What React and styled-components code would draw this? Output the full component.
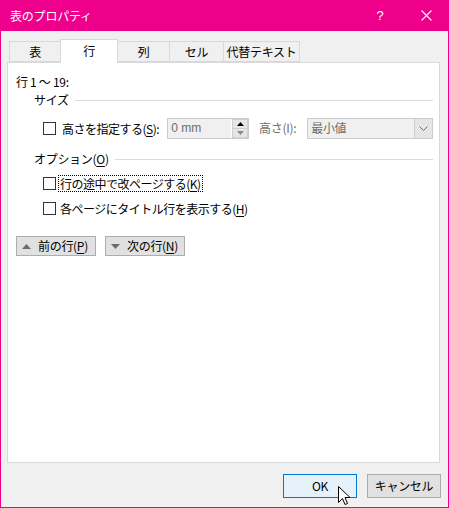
import React from "react";
import styled, { createGlobalStyle } from "styled-components";

const GlobalStyle = createGlobalStyle`
  body {
    margin: 0;
    background: #ffffff;
    font-family: "Noto Sans CJK JP", "Noto Sans", sans-serif;
    font-size: 12px;
    color: #000;
  }
`;

const PINK = "#EF008C";

const Window = styled.div`
  position: relative;
  width: 449px;
  height: 508px;
  box-sizing: border-box;
  border: 1px solid ${PINK};
  border-top: none;
  background: #f0f0f0;
  display: flex;
  flex-direction: column;
`;

const TitleBar = styled.div`
  height: 31px;
  background: ${PINK};
  margin: 0 -1px;
  display: flex;
  align-items: center;
  padding-left: 10px;
  color: #fff;
`;

const Title = styled.div`
  flex: 1;
  font-size: 12px;
  line-height: 16px;
  letter-spacing: -0.2px;
`;

const TitleButton = styled.div`
  width: 46px;
  height: 31px;
  display: flex;
  align-items: center;
  justify-content: center;
  font-family: "Liberation Sans", sans-serif;
  font-size: 13px;
`;

const Body = styled.div`
  flex: 1;
  display: flex;
  flex-direction: column;
  padding: 8px 8px 0 6px;
`;

const TabStrip = styled.div`
  display: flex;
  align-items: flex-end;
  height: 23px;
  padding-left: 2px;
`;

const Tab = styled.div`
  box-sizing: border-box;
  width: ${(p) => p.$w}px;
  height: ${(p) => (p.$active ? 24 : 21)}px;
  margin-bottom: ${(p) => (p.$active ? -1 : 0)}px;
  margin-left: ${(p) => (p.$first ? 0 : -1)}px;
  border: 1px solid #d9d9d9;
  border-bottom: ${(p) => (p.$active ? "none" : "1px solid #d9d9d9")};
  background: ${(p) => (p.$active ? "#fff" : "#f0f0f0")};
  position: relative;
  z-index: ${(p) => (p.$active ? 1 : 0)};
  display: flex;
  align-items: center;
  justify-content: center;
  padding-bottom: ${(p) => (p.$active ? 2 : 0)}px;
  line-height: 16px;
  letter-spacing: -0.3px;
`;

const Panel = styled.div`
  box-sizing: border-box;
  height: 401px;
  background: #fff;
  border: 1px solid #d9d9d9;
  padding: 11px 6px 0 8px;
  display: flex;
  flex-direction: column;
`;

const Text = styled.div`
  line-height: 16px;
  letter-spacing: -0.3px;
  white-space: nowrap;
  color: ${(p) => (p.$disabled ? "#6d6d6d" : "#000")};
`;

const GroupHeader = styled.div`
  display: flex;
  align-items: center;
  gap: 6px;
  margin-top: ${(p) => p.$mt}px;
  padding-left: 18px;
`;

const Rule = styled.div`
  flex: 1;
  height: 1px;
  background: #dcdcdc;
`;

const Row = styled.div`
  display: flex;
  align-items: center;
  margin-top: ${(p) => p.$mt}px;
  padding-left: 27px;
  height: ${(p) => p.$h || 18}px;
`;

const Check = styled.div`
  width: 13px;
  height: 13px;
  box-sizing: border-box;
  border: 1px solid #333;
  background: #fff;
  flex-shrink: 0;
`;

const Label = styled.div`
  margin-left: ${(p) => p.$ml ?? 4}px;
  padding: 0 1px;
  line-height: 15px;
  letter-spacing: -0.5px;
  white-space: nowrap;
  border: 1px ${(p) => (p.$focus ? "dotted #000" : "solid transparent")};
`;

const SpinBox = styled.div`
  box-sizing: border-box;
  width: 82px;
  height: 21px;
  margin-left: 6px;
  border: 1px solid #cccccc;
  background: #f0f0f0;
  display: flex;
  align-items: center;
  padding-left: 3px;
  font-family: "Liberation Sans", sans-serif;
  color: #6d6d6d;
`;

const SpinValue = styled.div`
  flex: 1;
  font-size: 12px;
`;

const SpinButtons = styled.div`
  width: 16px;
  height: 19px;
  display: flex;
  flex-direction: column;
  border-left: 1px solid #fff;
`;

const SpinButton = styled.div`
  flex: 1;
  display: flex;
  align-items: center;
  justify-content: center;
  background: #e6e6e6;
  border: 1px solid #cfcfcf;
  margin-top: ${(p) => (p.$down ? -1 : 0)}px;
`;

const SelectBox = styled.div`
  box-sizing: border-box;
  width: 126px;
  height: 21px;
  margin-left: 9px;
  border: 1px solid #cccccc;
  background: #f0f0f0;
  display: flex;
  align-items: center;
  color: #6d6d6d;
`;

const SelectValue = styled.div`
  flex: 1;
  padding-left: 3px;
  line-height: 16px;
  letter-spacing: -0.3px;
`;

const DropButton = styled.div`
  width: 17px;
  height: 19px;
  border-left: 1px solid #cccccc;
  background: #e6e6e6;
  display: flex;
  align-items: center;
  justify-content: center;
`;

const NavRow = styled.div`
  display: flex;
  gap: 9px;
  margin-top: 19px;
`;

const NavButton = styled.div`
  box-sizing: border-box;
  width: 80px;
  height: 20px;
  background: #e1e1e1;
  border: 1px solid #adadad;
  display: flex;
  align-items: center;
  padding-left: 5px;
  gap: 7px;
  line-height: 16px;
  letter-spacing: -0.3px;
`;

const Footer = styled.div`
  display: flex;
  justify-content: flex-end;
  gap: 10px;
  padding-top: 11px;
  margin-right: -1px;
`;

const DialogButton = styled.div`
  box-sizing: border-box;
  width: 74px;
  height: 24px;
  display: flex;
  align-items: center;
  justify-content: center;
  background: ${(p) => (p.$default ? "#e5f1fb" : "#e1e1e1")};
  border: 1px solid ${(p) => (p.$default ? "#0078d7" : "#adadad")};
  line-height: 16px;
  letter-spacing: -0.3px;
`;

const Cursor = styled.svg`
  position: absolute;
  left: 337px;
  top: 486px;
`;

const U = styled.span`
  text-decoration: underline;
  text-underline-offset: 2px;
`;

const Tri = ({ down }) => (
  <svg width="9" height="5" viewBox="0 0 9 5">
    <path d={down ? "M0 0 L9 0 L4.5 5 Z" : "M0 5 L9 5 L4.5 0 Z"} fill="#6d6d6d" />
  </svg>
);

const tabs = [
  { label: "表", w: 52 },
  { label: "行", w: 58, active: true },
  { label: "列", w: 53 },
  { label: "セル", w: 55 },
  { label: "代替テキスト", w: 77 },
];

export default function App() {
  return (
    <>
      <GlobalStyle />
      <Window>
        <TitleBar>
          <Title>表のプロパティ</Title>
          <TitleButton>?</TitleButton>
          <TitleButton>
            <svg width="11" height="11" viewBox="0 0 11 11">
              <path d="M0.5 0.5 L10.5 10.5 M10.5 0.5 L0.5 10.5" stroke="#fff" strokeWidth="1.1" />
            </svg>
          </TitleButton>
        </TitleBar>
        <Body>
          <TabStrip>
            {tabs.map((t, i) => (
              <Tab key={t.label} $w={t.w} $active={t.active} $first={i === 0}>
                {t.label}
              </Tab>
            ))}
          </TabStrip>
          <Panel>
            <Text>行 1 ～ 19:</Text>
            <GroupHeader $mt={2}>
              <Text>サイズ</Text>
              <Rule />
            </GroupHeader>
            <Row $mt={9} $h={22}>
              <Check />
              <Label>
                高さを指定する(<U>S</U>):
              </Label>
              <SpinBox>
                <SpinValue>0 mm</SpinValue>
                <SpinButtons>
                  <SpinButton>
                    <svg width="7" height="4" viewBox="0 0 7 4">
                      <path d="M0 4 L7 4 L3.5 0 Z" fill="#000" />
                    </svg>
                  </SpinButton>
                  <SpinButton $down>
                    <svg width="7" height="4" viewBox="0 0 7 4">
                      <path d="M0 0 L7 0 L3.5 4 Z" fill="#8a8a8a" />
                    </svg>
                  </SpinButton>
                </SpinButtons>
              </SpinBox>
              <Label $ml={8}>
                <Text $disabled>高さ(I):</Text>
              </Label>
              <SelectBox>
                <SelectValue>最小値</SelectValue>
                <DropButton>
                  <svg width="9" height="5" viewBox="0 0 9 5">
                    <path d="M0.5 0.5 L4.5 4.5 L8.5 0.5" stroke="#6d6d6d" fill="none" strokeWidth="1" />
                  </svg>
                </DropButton>
              </SelectBox>
            </Row>
            <GroupHeader $mt={12}>
              <Text>
                オプション(<U>O</U>)
              </Text>
              <Rule />
            </GroupHeader>
            <Row $mt={7}>
              <Check />
              <Label $ml={2} $focus>
                行の途中で改ページする(<U>K</U>)
              </Label>
            </Row>
            <Row $mt={7}>
              <Check />
              <Label $ml={2}>
                各ページにタイトル行を表示する(<U>H</U>)
              </Label>
            </Row>
            <NavRow>
              <NavButton>
                <Tri />
                <span>
                  前の行(<U>P</U>)
                </span>
              </NavButton>
              <NavButton>
                <Tri down />
                <span>
                  次の行(<U>N</U>)
                </span>
              </NavButton>
            </NavRow>
          </Panel>
          <Footer>
            <DialogButton $default>OK</DialogButton>
            <DialogButton>キャンセル</DialogButton>
          </Footer>
        </Body>
        <Cursor width="13" height="21" viewBox="0 0 13 21">
          <path
            d="M0.5 0.5 L0.5 16.5 L4.5 12.5 L7 18.5 L9.5 17.5 L7 11.5 L12 11.5 Z"
            fill="#fff"
            stroke="#000"
            strokeWidth="1"
            strokeLinejoin="miter"
          />
        </Cursor>
      </Window>
    </>
  );
}
